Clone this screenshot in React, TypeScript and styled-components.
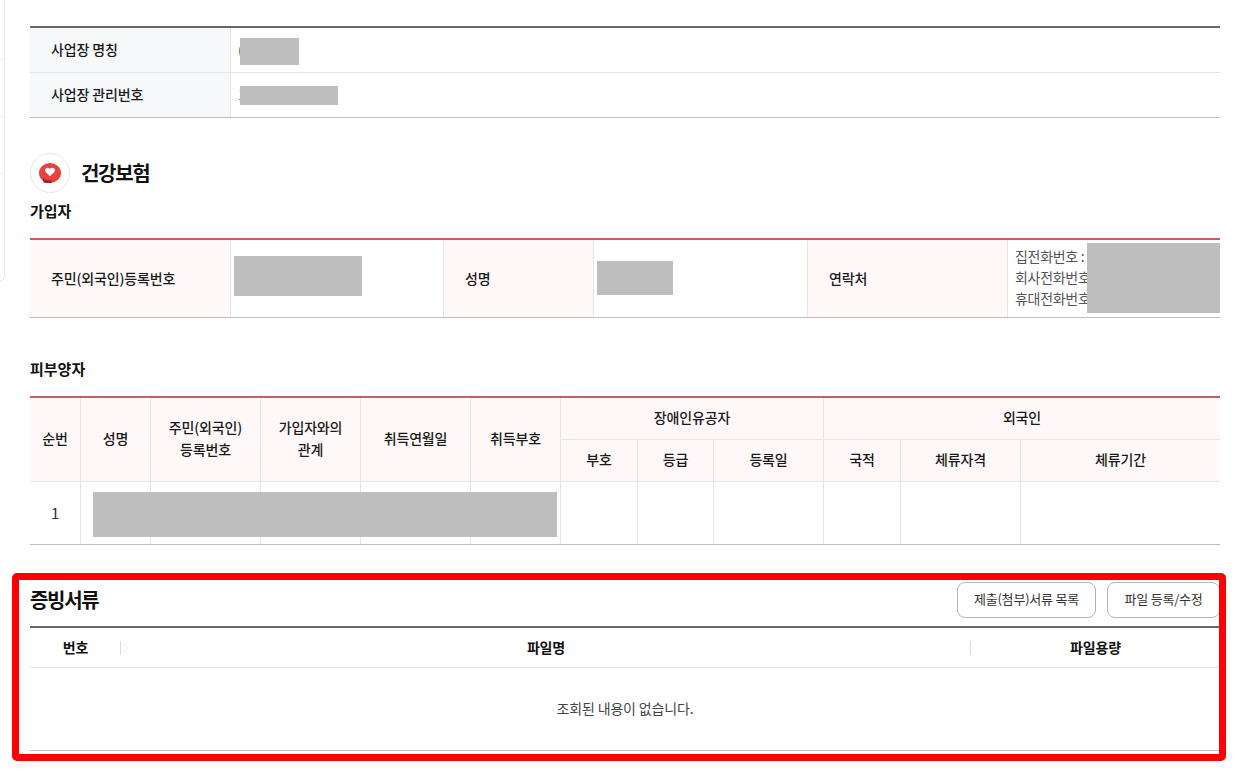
import React from "react";
import styled, { createGlobalStyle } from "styled-components";

const Global = createGlobalStyle`
  html, body { margin: 0; padding: 0; background: #fff; }
  body { font-family: "Noto Sans CJK KR", "Noto Sans", sans-serif; color: #222; overflow: hidden; }
  * { box-sizing: border-box; }
`;

const Page = styled.div`
  position: relative;
  width: 1244px;
  height: 773px;
  display: flex;
  align-items: flex-start;
  overflow: hidden;
`;

const SideSliver = styled.div`
  width: 5px;
  height: 281px;
  border-right: 1px solid #e8e8e8;
  border-bottom: 1px solid #e8e8e8;
  border-bottom-right-radius: 8px;
  padding-top: 59px;
  display: flex;
  flex-direction: column;
  gap: 56px;
  flex: none;
`;

const SideLine = styled.div`
  height: 1px;
  background: #efefef;
`;

const Main = styled.main`
  width: 1190px;
  margin-left: 25px;
  padding-top: 26px;
  flex: none;
`;

const Table = styled.table<{ $accent: string; $mt?: number }>`
  width: 100%;
  table-layout: fixed;
  border-collapse: separate;
  border-spacing: 0;
  border-top: 2px solid ${(p) => p.$accent};
  border-bottom: 1px solid #bdbdbd;
  margin-top: ${(p) => p.$mt ?? 0}px;
  font-size: 14px;
  letter-spacing: -0.15px;
`;

const InfoTh = styled.th<{ $bg: string; $h: number; $last?: boolean }>`
  background: ${(p) => p.$bg};
  height: ${(p) => p.$h}px;
  padding: 0 0 2px 21px;
  font-weight: 500;
  text-align: left;
  color: #1a1a1a;
  border-right: 1px solid #e4e4e4;
  border-bottom: ${(p) => (p.$last ? "none" : "1px solid #e4e4e4")};
`;

const InfoTd = styled.td<{ $last?: boolean; $divider?: boolean }>`
  position: relative;
  padding: 0 0 0 8px;
  color: #444;
  border-right: ${(p) => (p.$divider ? "1px solid #e4e4e4" : "none")};
  border-bottom: ${(p) => (p.$last ? "none" : "1px solid #e4e4e4")};
`;

const NameCell = styled(InfoTd)`
  padding: 0 0 2px 8px;
`;

const PeekText = styled.span`
  margin-left: -1px;
`;

const ContactCell = styled(InfoTd)`
  padding: 0 0 2px 8px;
`;

const Mask = styled.span<{ $l: number; $t: number; $w: number; $h: number }>`
  position: absolute;
  z-index: 1;
  left: ${(p) => p.$l}px;
  top: ${(p) => p.$t}px;
  width: ${(p) => p.$w}px;
  height: ${(p) => p.$h}px;
  background: #bebebe;
`;

const SectionHead = styled.div`
  display: flex;
  align-items: center;
  gap: 11px;
  height: 40px;
  margin-top: 35px;
`;

const SectionTitle = styled.h2`
  margin: 0 0 2px;
  font-size: 20px;
  font-weight: 700;
  letter-spacing: -1.3px;
  color: #111;
`;

const SubTitle = styled.h3<{ $mt: number }>`
  margin: ${(p) => p.$mt}px 0 0;
  height: 22px;
  line-height: 20px;
  font-size: 15px;
  font-weight: 700;
  letter-spacing: 0;
  color: #111;
`;

const IconCircle = styled.div`
  width: 40px;
  height: 40px;
  border: 1px solid #e4e4ea;
  border-radius: 50%;
  display: flex;
  align-items: center;
  justify-content: center;
  flex: none;
`;

const ContactLine = styled.div`
  font-size: 14px;
  line-height: 21px;
  color: #555;
  white-space: nowrap;
  letter-spacing: -0.3px;
  margin-left: -1px;
`;

const GridTh = styled.th<{ $h?: number; $end?: boolean }>`
  background: #fff8f8;
  height: ${(p) => (p.$h ? `${p.$h}px` : "auto")};
  padding: 0 0 3px;
  font-weight: 500;
  font-size: 14px;
  line-height: 22px;
  text-align: center;
  color: #1a1a1a;
  border-right: ${(p) => (p.$end ? "none" : "1px solid #e4e4e4")};
  border-bottom: 1px solid #e4e4e4;
`;

const GridTd = styled.td<{ $end?: boolean }>`
  position: relative;
  height: 62px;
  padding: 0 0 2px;
  text-align: center;
  font-size: 15px;
  color: #333;
  border-right: ${(p) => (p.$end ? "none" : "1px solid #e4e4e4")};
`;

const EvidenceHead = styled.div`
  display: flex;
  align-items: center;
  justify-content: space-between;
  margin-top: 37px;
  height: 36px;
  margin-bottom: 8px;
`;

const EvidenceTitle = styled.h2`
  margin: 0 0 2px;
  font-size: 20px;
  font-weight: 700;
  letter-spacing: -1.3px;
  color: #111;
`;

const ButtonRow = styled.div`
  display: flex;
  gap: 11px;
`;

const GhostButton = styled.button<{ $w: number }>`
  width: ${(p) => p.$w}px;
  height: 36px;
  padding: 0 0 3px;
  border: 1px solid #b5b5b5;
  border-radius: 8px;
  background: #fff;
  font-family: inherit;
  font-size: 13px;
  letter-spacing: -0.2px;
  color: #333;
`;

const DocTh = styled.th`
  height: 40px;
  padding: 0 0 2px;
  font-size: 14px;
  font-weight: 700;
  text-align: center;
  color: #111;
  border-bottom: 1px solid #e4e4e4;
  position: relative;
`;

const HeadDivider = styled.span`
  position: absolute;
  right: 0;
  top: 13px;
  width: 1px;
  height: 14px;
  background: #dcdcdc;
`;

const EmptyCell = styled.td`
  height: 82px;
  text-align: center;
  font-size: 14px;
  color: #444;
  padding: 0 0 2px;
`;

const Highlight = styled.div`
  position: absolute;
  z-index: 2;
  left: 12px;
  top: 573px;
  width: 1214px;
  height: 188px;
  border: 7px solid #ff0000;
  border-radius: 5px;
  pointer-events: none;
`;

const HeartIcon = () => (
  <svg width="24" height="24" viewBox="0 0 24 24" aria-hidden="true">
    <ellipse cx="12" cy="12" rx="11" ry="10" fill="#e8423f" />
    <path d="M4.500 17c1.600 1.300 3.600 2.100 6 2.300l3.500.1-.5 2.500c-2.700.3-5.600.1-8-.4z" fill="#a81f24" />
    <path d="M12 15.300 7.900 11.300a2.600 2.600 0 0 1 0-3.700 2.600 2.600 0 0 1 3.700 0l.4.400.4-.4a2.600 2.600 0 0 1 3.700 0 2.600 2.600 0 0 1 0 3.700z" fill="#fff" />
  </svg>
);

const depCols = [51, 70, 110, 100, 110, 90, 77, 76, 110, 77, 120, 199];

export default function App() {
  return (
    <Page>
      <Global />
      <SideSliver>
        <SideLine />
        <SideLine />
        <SideLine />
      </SideSliver>
      <Main>
        <Table $accent="#666">
          <colgroup>
            <col style={{ width: 201 }} />
            <col />
          </colgroup>
          <tbody>
            <tr>
              <InfoTh $bg="#f7f8fa" $h={45}>사업장 명칭</InfoTh>
              <NameCell><PeekText>(주)</PeekText><Mask $l={9} $t={10} $w={59} $h={27} /></NameCell>
            </tr>
            <tr>
              <InfoTh $bg="#f7f8fa" $h={44} $last>사업장 관리번호</InfoTh>
              <NameCell $last><PeekText>1</PeekText><Mask $l={9} $t={13} $w={98} $h={19} /></NameCell>
            </tr>
          </tbody>
        </Table>

        <SectionHead>
          <IconCircle><HeartIcon /></IconCircle>
          <SectionTitle>건강보험</SectionTitle>
        </SectionHead>
        <SubTitle $mt={8}>가입자</SubTitle>

        <Table $accent="#c06060" $mt={15}>
          <colgroup>
            <col style={{ width: 201 }} />
            <col style={{ width: 213 }} />
            <col style={{ width: 150 }} />
            <col style={{ width: 214 }} />
            <col style={{ width: 200 }} />
            <col />
          </colgroup>
          <tbody>
            <tr>
              <InfoTh $bg="#fff8f8" $h={77} $last>주민(외국인)등록번호</InfoTh>
              <InfoTd $last $divider><Mask $l={3} $t={16} $w={128} $h={40} /></InfoTd>
              <InfoTh $bg="#fff8f8" $h={77} $last>성명</InfoTh>
              <InfoTd $last $divider><Mask $l={3} $t={21} $w={76} $h={34} /></InfoTd>
              <InfoTh $bg="#fff8f8" $h={77} $last>연락처</InfoTh>
              <ContactCell $last>
                <ContactLine>집전화번호 : 0</ContactLine>
                <ContactLine>회사전화번호 :</ContactLine>
                <ContactLine>휴대전화번호 :</ContactLine>
                <Mask $l={79} $t={3} $w={133} $h={70} />
              </ContactCell>
            </tr>
          </tbody>
        </Table>

        <SubTitle $mt={41}>피부양자</SubTitle>
        <Table $accent="#c06060" $mt={15}>
          <colgroup>
            {depCols.map((w, i) => (
              <col key={i} style={{ width: w }} />
            ))}
          </colgroup>
          <thead>
            <tr>
              <GridTh rowSpan={2}>순번</GridTh>
              <GridTh rowSpan={2}>성명</GridTh>
              <GridTh rowSpan={2}>주민(외국인)<br />등록번호</GridTh>
              <GridTh rowSpan={2}>가입자와의<br />관계</GridTh>
              <GridTh rowSpan={2}>취득연월일</GridTh>
              <GridTh rowSpan={2}>취득부호</GridTh>
              <GridTh colSpan={3} $h={42}>장애인유공자</GridTh>
              <GridTh colSpan={3} $h={42} $end>외국인</GridTh>
            </tr>
            <tr>
              <GridTh $h={42}>부호</GridTh>
              <GridTh>등급</GridTh>
              <GridTh>등록일</GridTh>
              <GridTh>국적</GridTh>
              <GridTh>체류자격</GridTh>
              <GridTh $end>체류기간</GridTh>
            </tr>
          </thead>
          <tbody>
            <tr>
              <GridTd>1</GridTd>
              <GridTd><Mask $l={12} $t={10} $w={464} $h={45} /></GridTd>
              <GridTd />
              <GridTd />
              <GridTd />
              <GridTd />
              <GridTd />
              <GridTd />
              <GridTd />
              <GridTd />
              <GridTd />
              <GridTd $end />
            </tr>
          </tbody>
        </Table>

        <EvidenceHead>
          <EvidenceTitle>증빙서류</EvidenceTitle>
          <ButtonRow>
            <GhostButton $w={139}>제출(첨부)서류 목록</GhostButton>
            <GhostButton $w={113}>파일 등록/수정</GhostButton>
          </ButtonRow>
        </EvidenceHead>
        <Table $accent="#666">
          <colgroup>
            <col style={{ width: 91 }} />
            <col style={{ width: 850 }} />
            <col />
          </colgroup>
          <thead>
            <tr>
              <DocTh>번호<HeadDivider /></DocTh>
              <DocTh>파일명<HeadDivider /></DocTh>
              <DocTh>파일용량</DocTh>
            </tr>
          </thead>
          <tbody>
            <tr>
              <EmptyCell colSpan={3}>조회된 내용이 없습니다.</EmptyCell>
            </tr>
          </tbody>
        </Table>
      </Main>
      <Highlight />
    </Page>
  );
}
